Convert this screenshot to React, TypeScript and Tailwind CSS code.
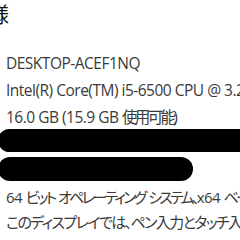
export default function App() {
  const jp = { fontFamily: '"Open Sans", "Noto Sans CJK JP", sans-serif' };
  const J = ({ children, t = "n" }: { children: React.ReactNode; t?: string }) => (
    <span className={t === "n" ? "tracking-[-1.6px]" : "tracking-[-2.7px]"}>{children}</span>
  );
  return (
    <div className="w-[240px] h-[240px] overflow-hidden bg-white relative text-[#3a3a3a] [font-feature-settings:'palt']" style={jp}>
      <div className="flex flex-col">
        <div className="h-[28px] ml-[-33px] text-[21px] leading-[28px] text-[#111] whitespace-nowrap">仕様</div>
        <div className="pl-[6px] pt-[22px] flex flex-col text-[15.5px] tracking-[-0.5px] leading-[27px] whitespace-nowrap">
          <div>DESKTOP-ACEF1NQ</div>
          <div>Intel(R) Core(TM) i5-6500 CPU @ 3.20GHz</div>
          <div>16.0 GB (15.9 GB <J t="w">使用可能</J>)</div>
        </div>
        <div className="mt-[-2px] flex flex-col gap-[5px]">
          <div className="h-[23px] w-[300px] ml-[-2px] rounded-full bg-black" />
          <div className="h-[24px] w-[195px] ml-[-2px] rounded-full bg-black" />
        </div>
        <div className="pl-[6px] pt-[4px] flex flex-col text-[15px] tracking-[-0.5px] leading-[25px] whitespace-nowrap">
          <div>64 <J t="w">ビット</J> <J t="w">オペレーティング</J> <J t="w">システム、</J>x64 <J t="w">ベース</J> <J t="w">プロセッサ</J></div>
          <div><J>このディスプレイでは、ペン入力とタッチ入力は利用できません</J></div>
        </div>
      </div>
    </div>
  );
}
